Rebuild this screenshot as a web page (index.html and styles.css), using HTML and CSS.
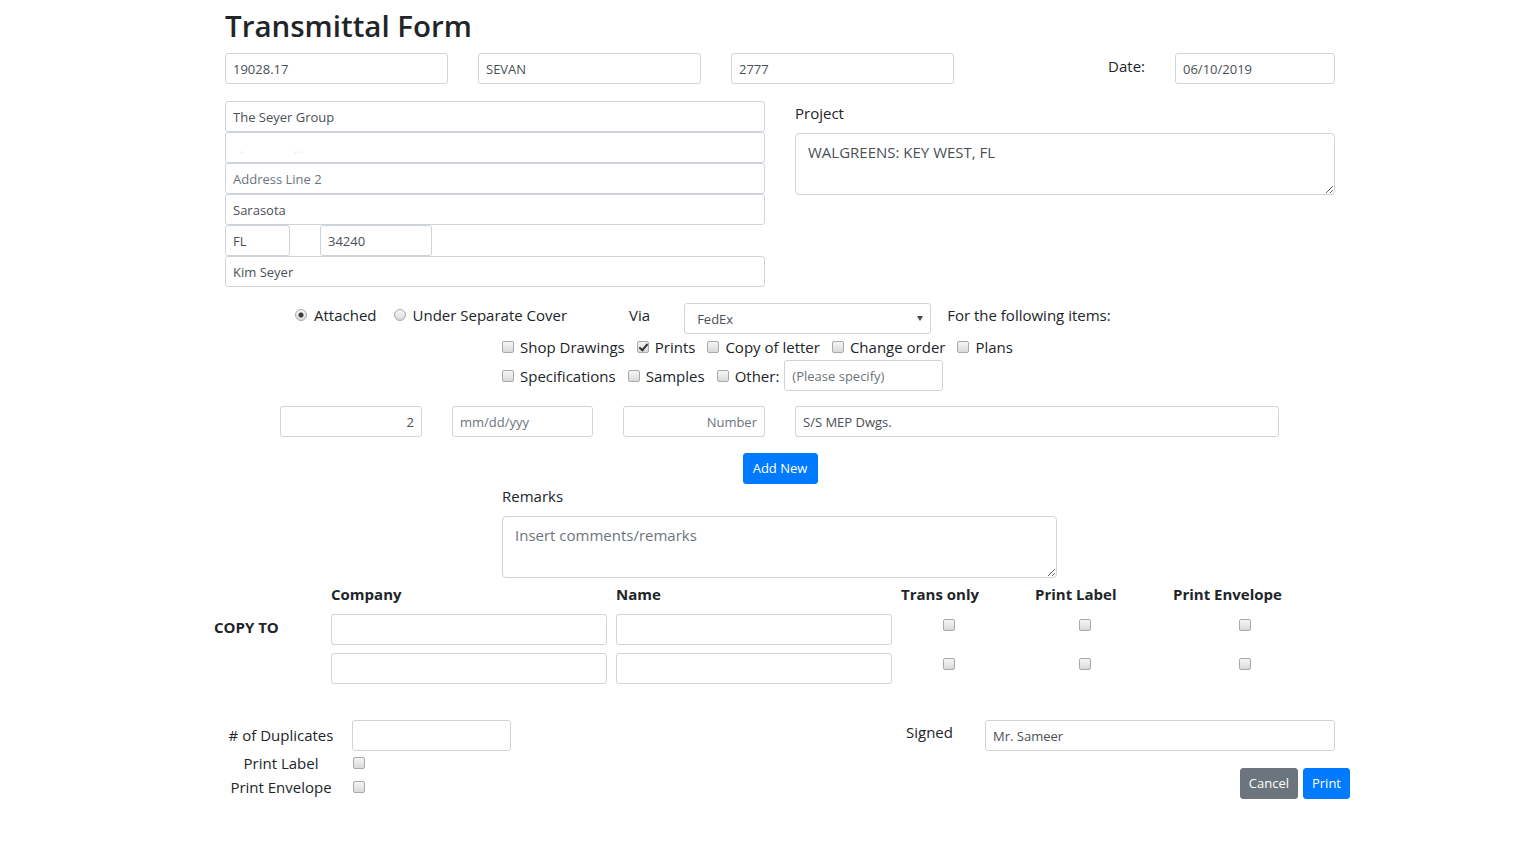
FILE: index.html
```html
<!DOCTYPE html>
<html lang="en">
<head>
<meta charset="utf-8">
<title>Transmittal Form</title>
<link rel="stylesheet" href="styles.css">
</head>
<body>
<div class="page">
  <h1 class="title">Transmittal Form</h1>

  <div class="top-row">
    <input class="fc fc-top" value="19028.17">
    <input class="fc fc-top" value="SEVAN">
    <input class="fc fc-top" value="2777">
    <div class="date-group">
      <label class="lbl">Date:</label>
      <input class="fc fc-date" value="06/10/2019">
    </div>
  </div>

  <div class="addr-row">
    <div class="addr-col">
      <input class="fc" value="The Seyer Group">
      <input class="fc fc-faint" value="  .               . .">
      <input class="fc" placeholder="Address Line 2">
      <input class="fc" value="Sarasota">
      <div class="state-zip">
        <input class="fc fc-state" value="FL">
        <input class="fc fc-zip" value="34240">
      </div>
      <input class="fc" value="Kim Seyer">
    </div>
    <div class="proj-col">
      <label class="lbl lbl-block">Project</label>
      <textarea class="ta ta-proj">WALGREENS: KEY WEST, FL</textarea>
    </div>
  </div>

  <div class="via-row">
    <label class="opt opt-attached"><input type="radio" name="send" class="rd" checked>Attached</label>
    <label class="opt opt-separate"><input type="radio" name="send" class="rd">Under Separate Cover</label>
    <span class="via-lbl">Via</span>
    <div class="sel-wrap">
      <select class="sel">
        <option>FedEx</option>
      </select>
      <span class="sel-arrow"></span>
    </div>
    <span class="items-lbl">For the following items:</span>
  </div>

  <div class="cb-row cb-row1">
    <label class="opt opt-cb"><input type="checkbox" class="cb">Shop Drawings</label>
    <label class="opt opt-cb"><input type="checkbox" class="cb" checked>Prints</label>
    <label class="opt opt-cb"><input type="checkbox" class="cb">Copy of letter</label>
    <label class="opt opt-cb"><input type="checkbox" class="cb">Change order</label>
    <label class="opt opt-cb"><input type="checkbox" class="cb">Plans</label>
  </div>
  <div class="cb-row cb-row2">
    <label class="opt opt-cb"><input type="checkbox" class="cb">Specifications</label>
    <label class="opt opt-cb"><input type="checkbox" class="cb">Samples</label>
    <label class="opt opt-other"><input type="checkbox" class="cb">Other:</label>
    <input class="fc fc-other" placeholder="(Please specify)">
  </div>

  <div class="items-row">
    <input class="fc fc-qty" value="2">
    <input class="fc fc-itemdate" placeholder="mm/dd/yyy">
    <input class="fc fc-num" placeholder="Number">
    <input class="fc fc-desc" value="S/S MEP Dwgs.">
  </div>

  <div class="add-row">
    <button class="btn btn-primary btn-add">Add New</button>
  </div>

  <div class="remarks">
    <label class="lbl lbl-block">Remarks</label>
    <textarea class="ta ta-remarks" placeholder="Insert comments/remarks"></textarea>
  </div>

  <div class="copy-grid">
    <div></div>
    <div class="ch">Company</div>
    <div class="ch">Name</div>
    <div class="ch">Trans only</div>
    <div class="ch">Print Label</div>
    <div class="ch">Print Envelope</div>

    <div class="copy-to">COPY TO</div>
    <div><input class="fc fc-copy"></div>
    <div><input class="fc fc-copy"></div>
    <div class="cc c-trans"><input type="checkbox" class="cb"></div>
    <div class="cc c-label"><input type="checkbox" class="cb"></div>
    <div class="cc c-env"><input type="checkbox" class="cb"></div>

    <div></div>
    <div><input class="fc fc-copy"></div>
    <div><input class="fc fc-copy"></div>
    <div class="cc c-trans"><input type="checkbox" class="cb"></div>
    <div class="cc c-label"><input type="checkbox" class="cb"></div>
    <div class="cc c-env"><input type="checkbox" class="cb"></div>
  </div>

  <div class="bottom">
    <div class="dup-grid">
      <div class="dup-lbl dup-first">#&nbsp;of Duplicates</div>
      <div><input class="fc fc-dup"></div>
      <div class="dup-lbl">Print Label</div>
      <div class="dup-cb"><input type="checkbox" class="cb"></div>
      <div class="dup-lbl">Print Envelope</div>
      <div class="dup-cb"><input type="checkbox" class="cb"></div>
    </div>
    <div class="sign-block">
      <div class="sign-row">
        <label class="lbl sign-lbl">Signed</label>
        <input class="fc fc-sign" value="Mr. Sameer">
      </div>
      <div class="btn-row">
        <button class="btn btn-secondary">Cancel</button>
        <button class="btn btn-primary">Print</button>
      </div>
    </div>
  </div>
</div>
</body>
</html>
```

FILE: styles.css
```css
* { box-sizing: border-box; }

body {
  margin: 0;
  background: #fff;
  color: #212529;
  font-family: "Open Sans", "Noto Sans", sans-serif;
  font-size: 15px;
  line-height: 24px;
}

.page {
  width: 1140px;
  margin-left: 210px;
}

.title {
  margin: 0;
  padding: 7px 15px 0;
  font-size: 29.5px;
  line-height: 38px;
  font-weight: 600;
  color: #212529;
}

/* form controls */
.fc {
  display: block;
  width: 100%;
  height: 31px;
  margin: 0;
  padding: 4px 7px;
  font-family: inherit;
  font-size: 13px;
  line-height: 21px;
  color: #495057;
  background: #fff;
  border: 1px solid #ced4da;
  border-radius: 3px;
  outline: none;
}
.fc::placeholder { color: #6c757d; opacity: 1; }
.fc-faint { color: #e8eaec; }

.ta {
  display: block;
  width: 100%;
  height: 62px;
  padding: 6px 12px;
  font-family: inherit;
  font-size: 15px;
  line-height: 24px;
  color: #495057;
  border: 1px solid #ced4da;
  border-radius: 4px;
  resize: vertical;
  outline: none;
}
.ta::placeholder { color: #6c757d; opacity: 1; }

.lbl { font-size: 15px; line-height: 24px; }
.lbl-block { display: block; margin-bottom: 8px; }

/* top row */
.top-row {
  display: flex;
  align-items: center;
  gap: 30px;
  padding: 0 15px;
  margin-top: 8px;
}
.fc-top { width: 223px; }
.date-group {
  margin-left: auto;
  display: flex;
  align-items: flex-start;
  gap: 30px;
}
.date-group .lbl { padding-top: 1px; }
.fc-date { width: 160px; }

/* address + project */
.addr-row {
  display: flex;
  gap: 30px;
  padding: 0 15px;
  margin-top: 17px;
}
.addr-col, .proj-col { width: 540px; }
.state-zip { display: flex; gap: 30px; }
.fc-state { width: 65px; }
.fc-zip { width: 112px; }

/* via row */
.via-row {
  display: flex;
  align-items: flex-start;
  height: 31px;
  margin-top: 16px;
  padding-left: 85px;
}
.opt {
  display: inline-flex;
  align-items: center;
  gap: 7px;
  white-space: nowrap;
}
.opt-attached { margin-right: 17px; }
.opt-separate { margin-right: 62px; }
.via-lbl { margin-right: 34px; }
.sel-wrap { position: relative; width: 247px; margin-right: 16px; }
.sel {
  display: block;
  width: 100%;
  height: 31px;
  padding: 0 12px;
  font-family: inherit;
  font-size: 13px;
  color: #495057;
  background: #fff;
  border: 1px solid #ced4da;
  border-radius: 3px;
  appearance: none;
  -webkit-appearance: none;
  outline: none;
}
.sel-arrow {
  position: absolute;
  right: 8px;
  top: 13px;
  width: 0;
  height: 0;
  border-left: 3px solid transparent;
  border-right: 3px solid transparent;
  border-top: 5px solid #444;
}

/* radios & checkboxes */
.rd, .cb {
  appearance: none;
  -webkit-appearance: none;
  margin: 0;
  flex: none;
  width: 12px;
  height: 12px;
  border: 1px solid #a9a9a9;
  background: linear-gradient(#f6f6f6, #dadada);
}
.rd { border-radius: 50%; }
.rd:checked {
  background: radial-gradient(circle, #3c3c3c 0 2px, #8a8a8a 2.5px, transparent 3px), linear-gradient(#f6f6f6, #dadada);
}
.cb { border-radius: 2px; position: relative; }
.cb:checked::after {
  content: "";
  position: absolute;
  left: 3px;
  top: 0px;
  width: 3px;
  height: 7px;
  border-right: 2px solid #333;
  border-bottom: 2px solid #333;
  transform: rotate(40deg);
}

.cb-row {
  display: flex;
  align-items: center;
  margin-left: 292px;
}
.cb-row1 { height: 26px; margin-top: 0; }
.cb-row2 { height: 31px; }
.opt-cb { gap: 6px; margin-right: 12px; }
.opt-other { gap: 6px; margin-right: 5px; }
.fc-other { width: 159px; }

/* item row */
.items-row {
  display: flex;
  gap: 30px;
  margin-top: 15px;
  margin-left: 70px;
}
.fc-qty { width: 142px; text-align: right; }
.fc-itemdate { width: 141px; }
.fc-num { width: 142px; text-align: right; }
.fc-desc { width: 484px; }

/* buttons */
.btn {
  display: inline-block;
  height: 31px;
  padding: 0 8px;
  font-family: inherit;
  font-size: 13px;
  line-height: 29px;
  color: #fff;
  border: 1px solid transparent;
  border-radius: 3px;
  cursor: pointer;
}
.btn-primary { background: #007bff; border-color: #007bff; }
.btn-secondary { background: #6c757d; border-color: #6c757d; }

.add-row {
  display: flex;
  justify-content: center;
  margin-top: 16px;
}
.btn-add { width: 75px; padding: 0; }

/* remarks */
.remarks { margin-left: 292px; width: 555px; }

/* copy to */
.copy-grid {
  display: grid;
  grid-template-columns: 117px 285px 285px 134px 138px 150px;
  row-gap: 8px;
  margin-top: 4px;
  margin-left: 4px;
}
.ch { font-weight: 700; line-height: 24px; }
.copy-to { font-weight: 700; align-self: start; padding-top: 1px; }
.fc-copy { width: 276px; }
.cc { display: flex; align-items: flex-start; padding-top: 5px; }
.c-trans { padding-left: 42px; }
.c-label { padding-left: 44px; }
.c-env { padding-left: 66px; }

/* bottom */
.bottom {
  display: flex;
  margin-top: 36px;
}
.dup-grid {
  width: 696px;
  display: grid;
  grid-template-columns: 142px 200px;
  align-content: start;
}
.dup-lbl { text-align: center; line-height: 24px; }
.dup-first { line-height: 31px; }
.dup-cb { display: flex; align-items: center; padding-left: 1px; }
.fc-dup { width: 159px; }

.sign-block { width: 444px; }
.sign-row { display: flex; align-items: flex-start; }
.sign-lbl { width: 79px; }
.fc-sign { width: 350px; }
.btn-row {
  display: flex;
  justify-content: flex-end;
  gap: 5px;
  margin-top: 17px;
}
```
